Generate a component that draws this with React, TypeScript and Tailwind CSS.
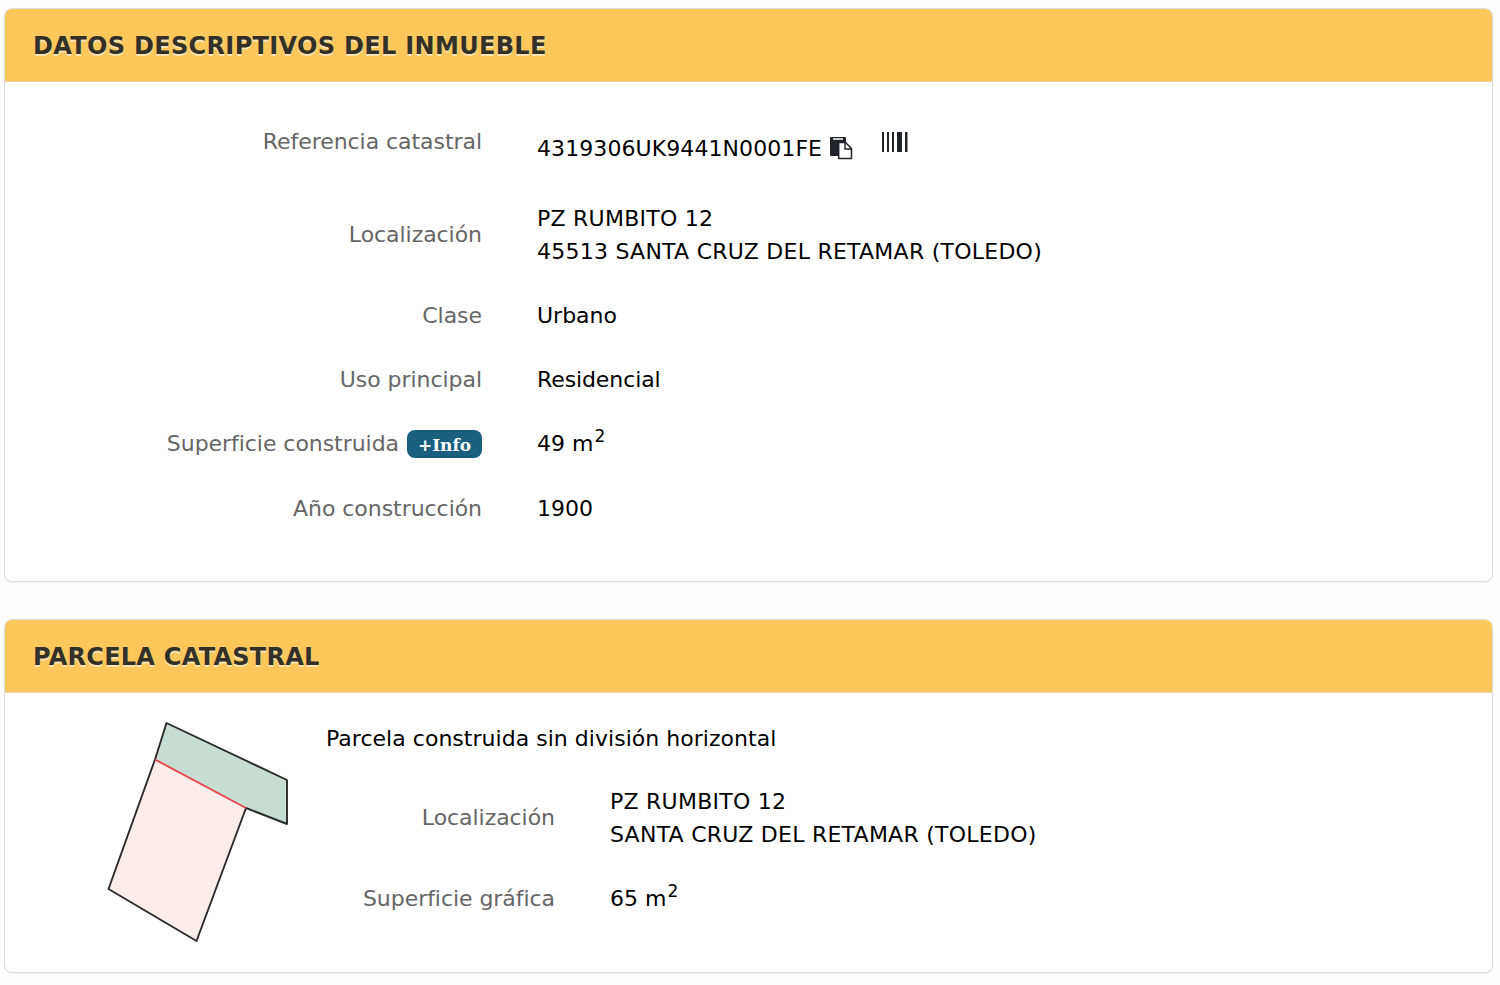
import React from 'react';

interface PanelProps {
    title: string;
    className: string;
    titleClassName: string;
    children: React.ReactNode;
}

interface FieldProps {
    label: React.ReactNode;
    labelClassName: string;
    className?: string;
    children: React.ReactNode;
}

function Panel({ title, className, titleClassName, children }: PanelProps) {
    return (
        <section className={`overflow-hidden rounded-lg border border-[#dddddd] bg-white shadow-[0_1px_1px_rgba(0,0,0,0.05)] ${className}`}>
            <header className="flex h-[73px] items-center border-b border-[#e6d3a8] bg-[#fec75b] pl-7">
                <h2 className={`whitespace-nowrap text-[24px] font-bold text-[#333027] [text-shadow:0_2px_0_#fbe3b4] ${titleClassName}`}>{title}</h2>
            </header>
            {children}
        </section>
    );
}

function Field({ label, labelClassName, className = 'h-[64.6px]', children }: FieldProps) {
    return (
        <div className={`flex items-center whitespace-nowrap ${className}`}>
            <dt className={`shrink-0 text-right tracking-[-0.05px] text-[#666666] ${labelClassName}`}>{label}</dt>
            <dd className="ml-[55px] text-black">{children}</dd>
        </div>
    );
}

function CopyIcon() {
    return (
        <svg className="h-[23px] w-[23px]" viewBox="0 0 23 23">
            <path d="M1 0h14q1 0 1 1v4h-6q-2 0-2 2v12H1q-1 0-1-1V1q0-1 1-1z" fill="#23232b" />
            <path d="M3 2h10" stroke="#fff" strokeWidth="1.3" />
            <path d="M8.700 5.500h6.800l6 6v10H8.700z" fill="#fff" stroke="#23232b" strokeWidth="1.5" strokeLinejoin="round" />
            <path d="M15 6v6h6" fill="none" stroke="#23232b" strokeWidth="1.4" />
        </svg>
    );
}

function BarcodeIcon() {
    return (
        <svg className="h-5 w-[26px]" viewBox="0 0 26 20" fill="#23232b">
            <path d="M0 0h2v20H0zM5 0h2v20H5zM10 0h2v20h-2zM15 0h5v20h-5zM23 0h2.5v20H23z" />
        </svg>
    );
}

function ParcelMap() {
    return (
        <svg className="h-[224px] w-[184px]" viewBox="106 720.5 184 224" strokeWidth="1.9" strokeLinejoin="round">
            <path d="M166.500 723.500L287 780.500V824.500L246 808.500L155 760z" fill="#c7ddd4" />
            <path d="M155 760L246 808.500L196.500 941.500L108.500 889.500z" fill="#fcecea" />
            <path d="M246 808.500L287 824.500V780.500L166.500 723.500L155 760L108.500 889.500L196.500 941.500z" fill="none" stroke="#2b2b2b" />
            <path d="M155 760L246 808.500" stroke="#e8474a" />
        </svg>
    );
}

export default function App() {
    return (
        <main className="flex h-[985px] w-[1500px] flex-col overflow-hidden bg-[#fefefe] pl-1 pt-2 font-['DejaVu_Sans',sans-serif] text-[22px] leading-[33px]">
            <Panel title="DATOS DESCRIPTIVOS DEL INMUEBLE" className="h-[574px] w-[1489px] shrink-0" titleClassName="pt-0.5 tracking-[0.33px]">
                <dl className="pl-px pt-[26px]">
                    <Field label="Referencia catastral" labelClassName="w-[476px] pb-[14px]" className="h-[81px]">
                        <span className="flex items-center">
                            <span className="tracking-[0.08px]">4319306UK9441N0001FE</span>
                            <span className="ml-2"><CopyIcon /></span>
                            <span className="ml-[29px] pb-[14px]"><BarcodeIcon /></span>
                        </span>
                    </Field>
                    <Field label="Localización" labelClassName="w-[476px]" className="-mt-[3px] h-[97px] tracking-[0.25px]">
                        PZ RUMBITO 12
                        <br />
                        45513 SANTA CRUZ DEL RETAMAR (TOLEDO)
                    </Field>
                    <Field label="Clase" labelClassName="w-[476px]">Urbano</Field>
                    <Field label="Uso principal" labelClassName="w-[476px]">
                        <span className="tracking-[-0.1px]">Residencial</span>
                    </Field>
                    <Field
                        className="-mt-px h-[64.6px]"
                        labelClassName="w-[476px]"
                        label={
                            <span className="flex items-center justify-end gap-2">
                                Superficie construida
                                <span className="mt-0.5 flex h-7 w-[75px] items-center justify-center rounded-lg bg-[#1b5f7f] pt-0.5 font-['DejaVu_Serif',serif] text-[17px] font-bold text-white">+Info</span>
                            </span>
                        }
                    >
                        49 m<sup className="ml-px text-[17px]">2</sup>
                    </Field>
                    <Field label="Año construcción" labelClassName="w-[476px]">1900</Field>
                </dl>
            </Panel>

            <Panel title="PARCELA CATASTRAL" className="mt-[37px] h-[354px] w-[1489px] shrink-0" titleClassName="pt-[3px] tracking-[0.27px]">
                <div className="flex pl-[101px] pt-[27px]">
                    <ParcelMap />
                    <div className="ml-9">
                        <p className="pt-[2px] tracking-[0.03px] text-black">Parcela construida sin división horizontal</p>
                        <dl className="pt-[14px]">
                            <Field label="Localización" labelClassName="w-[229px]" className="h-[97px] tracking-[0.25px]">
                                PZ RUMBITO 12
                                <br />
                                SANTA CRUZ DEL RETAMAR (TOLEDO)
                            </Field>
                            <Field label="Superficie gráfica" labelClassName="w-[229px]">
                                65 m<sup className="ml-px text-[17px]">2</sup>
                            </Field>
                        </dl>
                    </div>
                </div>
            </Panel>
        </main>
    );
}
